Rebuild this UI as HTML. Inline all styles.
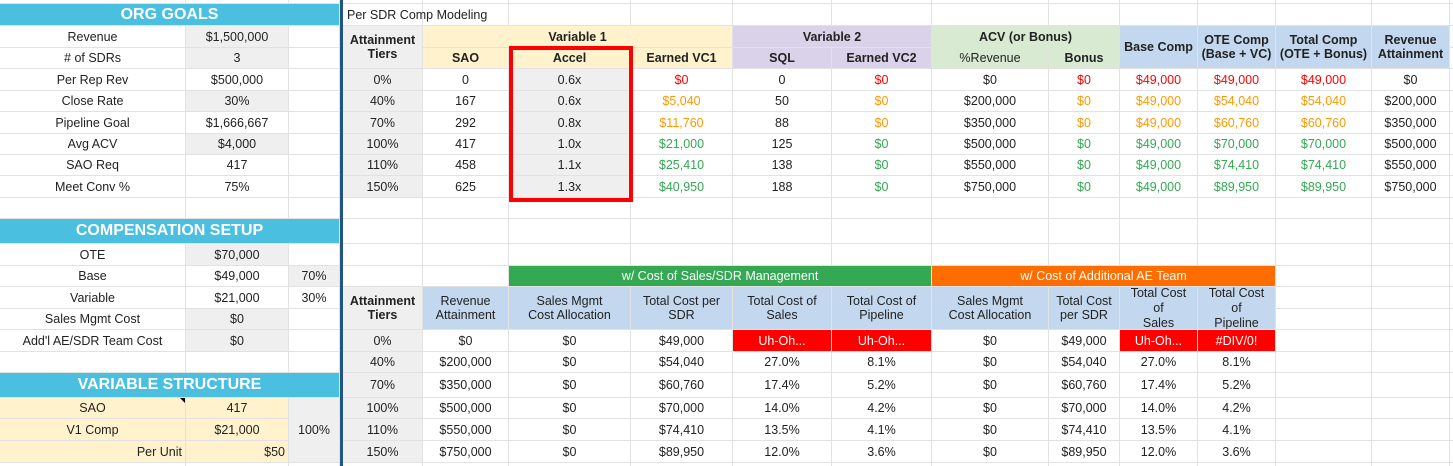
<!DOCTYPE html>
<html><head><meta charset="utf-8"><style>
body{margin:0;width:1453px;height:466px;overflow:hidden;background:#fff;font-family:"Liberation Sans",sans-serif;font-size:12.5px;color:#222;position:relative}
.c{position:absolute;display:flex;align-items:center;justify-content:center;text-align:center;line-height:14px;white-space:nowrap;overflow:hidden}
.v{position:absolute;top:0;height:466px;width:1px;background:#e2e2e2}
.h{position:absolute;left:0;width:1453px;height:1px;background:#e2e2e2}
.bd{font-weight:bold}
.g{background:#efefef}.y{background:#fff2cc}.p{background:#d9d2e9}.lg{background:#d9ead3}.b{background:#c3d8ee}
.cy{background:#4bbfe0;color:#fff;font-weight:bold;font-size:16px}
.R{color:#ff0000}.O{color:#ff9900}.G{color:#34a853}
.uh{background:#ff0000;color:#fff}
.r0{top:4px;height:21px}.r1{top:26px;height:21px}.r2{top:48px;height:20px}.r3{top:69px;height:21px}.r4{top:91px;height:20px}.r5{top:112px;height:21px}.r6{top:134px;height:20px}.r7{top:155px;height:20px}.r8{top:176px;height:21px}.r9{top:198px;height:20px}.r10{top:219px;height:24px}.r11{top:244px;height:21px}.r12{top:266px;height:20px}.r13{top:287px;height:21px}.r14{top:309px;height:20px}.r15{top:330px;height:21px}.r16{top:352px;height:20px}.r17{top:373px;height:24px}.r18{top:398px;height:20px}.r19{top:419px;height:21px}.r20{top:441px;height:21px}
.k0{left:0;width:185px}.k1{left:186px;width:102px}.k2{left:289px;width:50px}.k4{left:343px;width:79px}.k5{left:423px;width:85px}.k6{left:509px;width:121px}.k7{left:631px;width:101px}.k8{left:733px;width:98px}.k9{left:832px;width:99px}.k10{left:932px;width:116px}.k11{left:1049px;width:70px}.k12{left:1120px;width:77px}.k13{left:1198px;width:77px}.k14{left:1276px;width:95px}.k15{left:1372px;width:77px}
</style></head><body>
<!-- grid lines -->
<div class="v" style="left:185px"></div><div class="v" style="left:288px"></div><div class="v" style="left:339px"></div><div class="v" style="left:422px"></div><div class="v" style="left:508px"></div><div class="v" style="left:630px"></div><div class="v" style="left:732px"></div><div class="v" style="left:831px"></div><div class="v" style="left:931px"></div><div class="v" style="left:1048px"></div><div class="v" style="left:1119px"></div><div class="v" style="left:1197px"></div><div class="v" style="left:1275px"></div><div class="v" style="left:1371px"></div><div class="v" style="left:1449px"></div>
<div class="h" style="top:3px"></div><div class="h" style="top:25px"></div><div class="h" style="top:47px"></div><div class="h" style="top:68px"></div><div class="h" style="top:90px"></div><div class="h" style="top:111px"></div><div class="h" style="top:133px"></div><div class="h" style="top:154px"></div><div class="h" style="top:175px"></div><div class="h" style="top:197px"></div><div class="h" style="top:218px"></div><div class="h" style="top:243px"></div><div class="h" style="top:265px"></div><div class="h" style="top:286px"></div><div class="h" style="top:308px"></div><div class="h" style="top:329px"></div><div class="h" style="top:351px"></div><div class="h" style="top:372px"></div><div class="h" style="top:397px"></div><div class="h" style="top:418px"></div><div class="h" style="top:440px"></div><div class="h" style="top:462px"></div>

<!-- left: org goals -->
<div class="c cy r0" style="left:0;width:339px">ORG GOALS</div>
<div class="c r1 k0">Revenue</div><div class="c r1 k1 g">$1,500,000</div>
<div class="c r2 k0"># of SDRs</div><div class="c r2 k1 g">3</div>
<div class="c r3 k0">Per Rep Rev</div><div class="c r3 k1">$500,000</div>
<div class="c r4 k0">Close Rate</div><div class="c r4 k1 g">30%</div>
<div class="c r5 k0">Pipeline Goal</div><div class="c r5 k1">$1,666,667</div>
<div class="c r6 k0">Avg ACV</div><div class="c r6 k1 g">$4,000</div>
<div class="c r7 k0">SAO Req</div><div class="c r7 k1">417</div>
<div class="c r8 k0">Meet Conv %</div><div class="c r8 k1">75%</div>
<div class="c cy r10" style="left:0;width:339px">COMPENSATION SETUP</div>
<div class="c r11 k0">OTE</div><div class="c r11 k1 g">$70,000</div>
<div class="c r12 k0">Base</div><div class="c r12 k1">$49,000</div><div class="c r12 k2 g">70%</div>
<div class="c r13 k0">Variable</div><div class="c r13 k1">$21,000</div><div class="c r13 k2">30%</div>
<div class="c r14 k0">Sales Mgmt Cost</div><div class="c r14 k1 g">$0</div>
<div class="c r15 k0">Add'l AE/SDR Team Cost</div><div class="c r15 k1 g">$0</div>
<div class="c cy r17" style="left:0;width:339px">VARIABLE STRUCTURE</div>
<div class="c r18 k0 y">SAO</div><div class="c r18 k1 y">417</div>
<div style="position:absolute;left:180px;top:398px;width:0;height:0;border-left:5px solid transparent;border-top:5px solid #000"></div>
<div class="c r19 k0 y">V1 Comp</div><div class="c r19 k1 y">$21,000</div>
<div class="c r20 k0 y" style="justify-content:flex-end;padding-right:3px;width:182px">Per Unit</div><div class="c r20 k1 y" style="justify-content:flex-end;padding-right:3px;width:99px">$50</div>
<div class="c g k2" style="top:398px;height:64px">100%</div>

<div style="position:absolute;left:340px;top:0;width:3px;height:466px;background:#20567f"></div>

<!-- right top -->
<div class="c r0" style="left:347px;width:300px;justify-content:flex-start">Per SDR Comp Modeling</div>
<div class="c k4 g bd" style="top:26px;height:42px">Attainment<br>Tiers</div>
<div class="c r1 y bd" style="left:423px;width:309px">Variable 1</div>
<div class="c r2 k5 y bd">SAO</div><div class="c r2 k6 y bd">Accel</div><div class="c r2 k7 y bd">Earned VC1</div>
<div class="c r1 p bd" style="left:733px;width:198px">Variable 2</div>
<div class="c r2 k8 p bd">SQL</div><div class="c r2 k9 p bd">Earned VC2</div>
<div class="c r1 lg bd" style="left:932px;width:187px">ACV (or Bonus)</div>
<div class="c r2 k10 lg">%Revenue</div><div class="c r2 k11 lg bd">Bonus</div>
<div class="c k12 b bd" style="top:26px;height:42px">Base Comp</div>
<div class="c k13 b bd" style="top:26px;height:42px">OTE Comp<br>(Base + VC)</div>
<div class="c k14 b bd" style="top:26px;height:42px">Total Comp<br>(OTE + Bonus)</div>
<div class="c k15 b bd" style="top:26px;height:42px">Revenue<br>Attainment</div>

<div class="c r3 k4 g">0%</div><div class="c r3 k5">0</div><div class="c r3 k6 g">0.6x</div><div class="c r3 k7 R">$0</div><div class="c r3 k8">0</div><div class="c r3 k9 R">$0</div><div class="c r3 k10">$0</div><div class="c r3 k11 R">$0</div><div class="c r3 k12 R">$49,000</div><div class="c r3 k13 R">$49,000</div><div class="c r3 k14 R">$49,000</div><div class="c r3 k15">$0</div>
<div class="c r4 k4 g">40%</div><div class="c r4 k5">167</div><div class="c r4 k6 g">0.6x</div><div class="c r4 k7 O">$5,040</div><div class="c r4 k8">50</div><div class="c r4 k9 O">$0</div><div class="c r4 k10">$200,000</div><div class="c r4 k11 O">$0</div><div class="c r4 k12 O">$49,000</div><div class="c r4 k13 O">$54,040</div><div class="c r4 k14 O">$54,040</div><div class="c r4 k15">$200,000</div>
<div class="c r5 k4 g">70%</div><div class="c r5 k5">292</div><div class="c r5 k6 g">0.8x</div><div class="c r5 k7 O">$11,760</div><div class="c r5 k8">88</div><div class="c r5 k9 O">$0</div><div class="c r5 k10">$350,000</div><div class="c r5 k11 O">$0</div><div class="c r5 k12 O">$49,000</div><div class="c r5 k13 O">$60,760</div><div class="c r5 k14 O">$60,760</div><div class="c r5 k15">$350,000</div>
<div class="c r6 k4 g">100%</div><div class="c r6 k5">417</div><div class="c r6 k6 g">1.0x</div><div class="c r6 k7 G">$21,000</div><div class="c r6 k8">125</div><div class="c r6 k9 G">$0</div><div class="c r6 k10">$500,000</div><div class="c r6 k11 G">$0</div><div class="c r6 k12 G">$49,000</div><div class="c r6 k13 G">$70,000</div><div class="c r6 k14 G">$70,000</div><div class="c r6 k15">$500,000</div>
<div class="c r7 k4 g">110%</div><div class="c r7 k5">458</div><div class="c r7 k6 g">1.1x</div><div class="c r7 k7 G">$25,410</div><div class="c r7 k8">138</div><div class="c r7 k9 G">$0</div><div class="c r7 k10">$550,000</div><div class="c r7 k11 G">$0</div><div class="c r7 k12 G">$49,000</div><div class="c r7 k13 G">$74,410</div><div class="c r7 k14 G">$74,410</div><div class="c r7 k15">$550,000</div>
<div class="c r8 k4 g">150%</div><div class="c r8 k5">625</div><div class="c r8 k6 g">1.3x</div><div class="c r8 k7 G">$40,950</div><div class="c r8 k8">188</div><div class="c r8 k9 G">$0</div><div class="c r8 k10">$750,000</div><div class="c r8 k11 G">$0</div><div class="c r8 k12 G">$49,000</div><div class="c r8 k13 G">$89,950</div><div class="c r8 k14 G">$89,950</div><div class="c r8 k15">$750,000</div>

<div style="position:absolute;left:509px;top:46px;width:116px;height:148px;border:4px solid #ff0000"></div>

<!-- right bottom -->
<div class="c r12" style="left:509px;width:422px;background:#34a853;color:#fff">w/ Cost of Sales/SDR Management</div>
<div class="c r12" style="left:932px;width:343px;background:#ff6d01;color:#fff">w/ Cost of Additional AE Team</div>
<div class="c k4 g bd" style="top:287px;height:42px">Attainment<br>Tiers</div>
<div class="c k5 b" style="top:287px;height:42px">Revenue<br>Attainment</div>
<div class="c k6 b" style="top:287px;height:42px">Sales Mgmt<br>Cost Allocation</div>
<div class="c k7 b" style="top:287px;height:42px">Total Cost per<br>SDR</div>
<div class="c k8 b" style="top:287px;height:42px">Total Cost of<br>Sales</div>
<div class="c k9 b" style="top:287px;height:42px">Total Cost of<br>Pipeline</div>
<div class="c k10 b" style="top:287px;height:42px">Sales Mgmt<br>Cost Allocation</div>
<div class="c k11 b" style="top:287px;height:42px">Total Cost<br>per SDR</div>
<div class="c k12 b" style="top:287px;height:42px;line-height:15px">Total Cost<br>of<br>Sales</div>
<div class="c k13 b" style="top:287px;height:42px;line-height:15px">Total Cost<br>of<br>Pipeline</div>

<div class="c r15 k4 g">0%</div><div class="c r15 k5">$0</div><div class="c r15 k6">$0</div><div class="c r15 k7">$49,000</div><div class="c r15 k8 uh">Uh-Oh...</div><div class="c r15 k9 uh">Uh-Oh...</div><div class="c r15 k10">$0</div><div class="c r15 k11">$49,000</div><div class="c r15 k12 uh">Uh-Oh...</div><div class="c r15 k13 uh">#DIV/0!</div>
<div class="c r16 k4 g">40%</div><div class="c r16 k5">$200,000</div><div class="c r16 k6">$0</div><div class="c r16 k7">$54,040</div><div class="c r16 k8">27.0%</div><div class="c r16 k9">8.1%</div><div class="c r16 k10">$0</div><div class="c r16 k11">$54,040</div><div class="c r16 k12">27.0%</div><div class="c r16 k13">8.1%</div>
<div class="c r17 k4 g">70%</div><div class="c r17 k5">$350,000</div><div class="c r17 k6">$0</div><div class="c r17 k7">$60,760</div><div class="c r17 k8">17.4%</div><div class="c r17 k9">5.2%</div><div class="c r17 k10">$0</div><div class="c r17 k11">$60,760</div><div class="c r17 k12">17.4%</div><div class="c r17 k13">5.2%</div>
<div class="c r18 k4 g">100%</div><div class="c r18 k5">$500,000</div><div class="c r18 k6">$0</div><div class="c r18 k7">$70,000</div><div class="c r18 k8">14.0%</div><div class="c r18 k9">4.2%</div><div class="c r18 k10">$0</div><div class="c r18 k11">$70,000</div><div class="c r18 k12">14.0%</div><div class="c r18 k13">4.2%</div>
<div class="c r19 k4 g">110%</div><div class="c r19 k5">$550,000</div><div class="c r19 k6">$0</div><div class="c r19 k7">$74,410</div><div class="c r19 k8">13.5%</div><div class="c r19 k9">4.1%</div><div class="c r19 k10">$0</div><div class="c r19 k11">$74,410</div><div class="c r19 k12">13.5%</div><div class="c r19 k13">4.1%</div>
<div class="c r20 k4 g">150%</div><div class="c r20 k5">$750,000</div><div class="c r20 k6">$0</div><div class="c r20 k7">$89,950</div><div class="c r20 k8">12.0%</div><div class="c r20 k9">3.6%</div><div class="c r20 k10">$0</div><div class="c r20 k11">$89,950</div><div class="c r20 k12">12.0%</div><div class="c r20 k13">3.6%</div>
</body></html>
